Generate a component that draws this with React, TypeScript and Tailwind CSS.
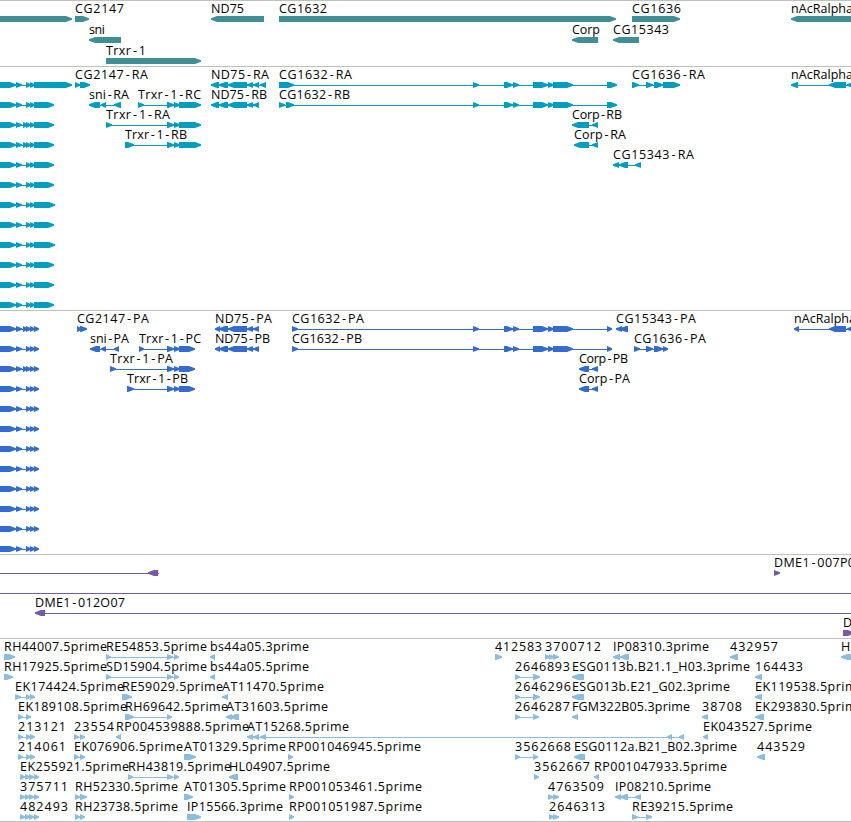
type Block = [number, number];

type Feature = {
   // label text, left edge and width in px
   label?: string;
   x: number;
   width?: number;
   blocks?: Block[];
   reverse?: boolean;
   // connector range when it runs past the blocks
   line?: Block;
};

type TrackProps = {
   rows: Feature[][];
   color: string;
   className: string;
   rowClass?: string;
};

const fwd = (label: string, x: number, end: number, blocks: Block[]): Feature => ({
   label,
   x,
   width: end - x,
   blocks,
});

const rev = (label: string, x: number, end: number, blocks: Block[]): Feature => ({
   label,
   x,
   width: end - x,
   blocks,
   reverse: true,
});

const left = (blocks: Block[]): Feature => ({ x: 0, blocks });

// --- GENES ---
const genes: Feature[][] = [
   [
      left([[-20, 72]]),
      fwd("CG2147", 75, 124, [[75, 89]]),
      rev("ND75", 211, 244, [[211, 264]]),
      fwd("CG1632", 279, 327, [[279, 616]]),
      fwd("CG1636", 632, 681, [[632, 680]]),
      rev("nAcRalpha", 791, 853, [[791, 870]]),
   ],
   [
      rev("sni", 89, 105, [[89, 121]]),
      rev("Corp", 572, 600, [[572, 598]]),
      rev("CG15343", 613, 669, [[613, 639]]),
   ],
   [fwd("Trxr-1", 106, 146, [[106, 201]])],
];

// --- TRANSCRIPTS ---
const sparse: Block[] = [[-9, 16], [16, 22], [26, 31], [30, 35]];
const dense: Block[] = [[-9, 16], [16, 22], [23, 28], [26, 31], [30, 35]];
const cg1632: Block[] = [[473, 479], [504, 513], [513, 519], [533, 548], [548, 554], [553, 573]];
const trxr: Block[] = [[167, 174], [174, 180], [179, 201]];
const nd75: Block[] = [[211, 219], [219, 228], [228, 247]];

const transcripts: Feature[][] = [
   [
      left([...sparse, [34, 72]]),
      fwd("CG2147-RA", 75, 148, [[75, 80], [80, 90]]),
      rev("ND75-RA", 211, 269, [...nd75, [247, 253], [253, 259], [260, 266]]),
      fwd("CG1632-RA", 279, 352, [[279, 294], ...cg1632, [607, 617]]),
      fwd("CG1636-RA", 632, 705, [[632, 639], [646, 653], [654, 663], [663, 680]]),
      rev("nAcRalpha", 791, 853, [[791, 798], [829, 846], [847, 870]]),
   ],
   [
      left([...sparse, [34, 54]]),
      rev("sni-RA", 89, 129, [[89, 100], [101, 106], [114, 121]]),
      fwd("Trxr-1-RC", 138, 201, [[138, 144], ...trxr]),
      rev("ND75-RB", 211, 267, [...nd75, [247, 253], [253, 259]]),
      fwd("CG1632-RB", 279, 350, [[279, 285], [286, 294], ...cg1632, [607, 617]]),
   ],
   [
      left([...dense, [34, 54]]),
      fwd("Trxr-1-RA", 106, 170, [[106, 112], ...trxr]),
      rev("Corp-RB", 572, 622, [[572, 589], [592, 598]]),
   ],
   [
      left([...dense, [34, 54]]),
      fwd("Trxr-1-RB", 125, 187, [[125, 134], ...trxr]),
      rev("Corp-RA", 574, 626, [[574, 589], [592, 598]]),
   ],
   [
      left([...sparse, [34, 54]]),
      rev("CG15343-RA", 613, 694, [[613, 619], [619, 628], [635, 641]]),
   ],
   [left([...sparse, [34, 54]])],
   [left([...sparse, [34, 55]])],
   [left([...sparse, [34, 54]])],
   [left([...sparse, [34, 55]])],
   [left([...sparse, [34, 54]])],
   [left([...sparse, [34, 54]])],
   [left([...sparse, [34, 54]])],
];

// --- PROTEINS ---
const trxrP: Block[] = [[167, 174], [174, 180], [179, 195]];
const nd75P: Block[] = [[215, 220], [219, 228], [228, 247], [247, 253], [253, 259]];

const proteins: Feature[][] = [
   [
      left([...dense, [34, 39]]),
      fwd("CG2147-PA", 77, 149, [[77, 82], [80, 87]]),
      rev("ND75-PA", 215, 272, nd75P),
      fwd("CG1632-PA", 292, 364, [[292, 298], ...cg1632, [607, 612]]),
      rev("CG15343-PA", 616, 696, [[616, 622], [620, 628]]),
      rev("nAcRalpha", 794, 856, [[794, 799], [829, 846], [847, 870]]),
   ],
   [
      left([...sparse, [34, 39]]),
      rev("sni-PA", 90, 129, [[90, 100], [101, 106], [114, 119]]),
      fwd("Trxr-1-PC", 139, 201, [[139, 144], ...trxrP]),
      rev("ND75-PB", 215, 270, nd75P),
      fwd("CG1632-PB", 292, 362, [[292, 298], ...cg1632, [607, 612]]),
      fwd("CG1636-PA", 634, 706, [[634, 640], [646, 653], [654, 663], [663, 668]]),
   ],
   [
      left([...dense, [34, 39]]),
      fwd("Trxr-1-PA", 110, 173, [[110, 116], ...trxrP]),
      rev("Corp-PB", 579, 628, [[579, 589], [592, 598]]),
   ],
   [
      left([...sparse, [34, 39]]),
      fwd("Trxr-1-PB", 127, 188, [[127, 134], ...trxrP]),
      rev("Corp-PA", 579, 630, [[579, 589], [592, 598]]),
   ],
   [left([...sparse, [34, 39]])],
   [left([...sparse, [34, 39]])],
   [left([...sparse, [34, 39]])],
   [left([...sparse, [34, 39]])],
   [left([...sparse, [34, 39]])],
   [left([...sparse, [34, 39]])],
   [left([...sparse, [34, 39]])],
   [left([...sparse, [34, 39]])],
];

// --- CLONES ---
const clones: Feature[][] = [
   [
      { x: 0, blocks: [[148, 158]], reverse: true, line: [0, 159] },
      fwd("DME1-007P0", 774, 855, [[774, 780]]),
   ],
   [{ x: 0, line: [0, 851] }],
   [{ label: "DME1-012O07", x: 35, width: 90, blocks: [[35, 45]], reverse: true, line: [40, 851] }],
   [fwd("D", 843, 852, [[843, 854]])],
];

// --- ESTS ---
const ests: Feature[][] = [
   [
      fwd("RH44007.5prime", 4, 107, [[4, 15]]),
      fwd("RE54853.5prime", 106, 207, [[106, 111], [167, 173], [174, 179]]),
      rev("bs44a05.3prime", 210, 309, [[210, 215]]),
      fwd("412583", 495, 542, [[495, 502]]),
      fwd("3700712", 545, 601, [[545, 550], [549, 554], [553, 559]]),
      rev("IP08310.3prime", 613, 709, [[613, 620], [620, 629]]),
      rev("432957", 730, 778, [[730, 738]]),
      rev("H", 841, 851, [[841, 860]]),
   ],
   [
      fwd("RH17925.5prime", 4, 107, [[4, 13]]),
      fwd("SD15904.5prime", 106, 207, [[106, 111], [167, 173], [174, 179]]),
      rev("bs44a05.5prime", 210, 309, [[210, 215]]),
      fwd("2646893", 515, 570, [[515, 520], [533, 540]]),
      rev("ESG0113b.B21.1_H03.3prime", 572, 750, [[572, 584]]),
      rev("164433", 755, 803, [[755, 762]]),
   ],
   [
      fwd("EK174424.5prime", 15, 124, [[15, 21], [26, 31], [30, 35]]),
      fwd("RE59029.5prime", 122, 223, [[122, 132]]),
      rev("AT11470.5prime", 222, 324, [[222, 228]]),
      fwd("2646296", 515, 571, [[515, 520], [533, 540]]),
      rev("ESG013b.E21_G02.3prime", 572, 730, [[572, 584]]),
      rev("EK119538.5prime", 755, 864, [[755, 762]]),
   ],
   [
      fwd("EK189108.5prime", 18, 127, [[18, 23], [26, 31]]),
      fwd("RH69642.5prime", 125, 228, [[125, 134], [167, 172]]),
      rev("AT31603.5prime", 226, 328, [[226, 232], [230, 239]]),
      fwd("2646287", 515, 570, [[515, 520], [533, 539]]),
      rev("FGM322B05.3prime", 572, 690, [[572, 578]]),
      rev("38708", 702, 742, [[702, 708]]),
      rev("EK293830.5prime", 755, 864, [[755, 764]]),
   ],
   [
      fwd("213121", 18, 66, [[18, 23], [26, 31], [30, 35]]),
      fwd("23554", 74, 114, [[74, 79], [80, 85]]),
      rev("RP004539888.5prime", 116, 249, [[116, 121]]),
      rev("AT15268.5prime", 247, 349, [[247, 253], [253, 259], [260, 266], [667, 672], [679, 684]]),
      rev("EK043527.5prime", 703, 812, [[703, 708]]),
   ],
   [
      fwd("214061", 18, 66, [[18, 23], [26, 31], [30, 35]]),
      fwd("EK076906.5prime", 74, 183, [[74, 79], [80, 85]]),
      fwd("AT01329.5prime", 184, 286, [[184, 196]]),
      fwd("RP001046945.5prime", 288, 421, [[288, 293]]),
      fwd("3562668", 515, 571, [[515, 520], [533, 538]]),
      rev("ESG0112a.B21_B02.3prime", 574, 737, [[574, 585]]),
      rev("443529", 757, 805, [[757, 765]]),
   ],
   [
      fwd("EK255921.5prime", 20, 129, [[20, 25], [25, 30], [29, 34], [34, 39]]),
      fwd("RH43819.5prime", 128, 231, [[128, 133], [167, 173], [174, 179]]),
      rev("HL04907.5prime", 229, 330, [[229, 238]]),
      fwd("3562667", 534, 590, [[534, 539]]),
      rev("RP001047933.5prime", 594, 727, [[594, 599]]),
   ],
   [
      fwd("375711", 20, 68, [[20, 25], [25, 30], [29, 34], [34, 39]]),
      fwd("RH52330.5prime", 75, 178, [[75, 80], [80, 87]]),
      fwd("AT01305.5prime", 184, 286, [[184, 193]]),
      fwd("RP001053461.5prime", 289, 422, [[289, 294]]),
      fwd("4763509", 548, 604, [[548, 553], [553, 559]]),
      rev("IP08210.5prime", 615, 711, [[615, 621], [620, 628], [635, 641]]),
   ],
   [
      fwd("482493", 20, 68, [[20, 25], [25, 30], [29, 34], [34, 39]]),
      fwd("RH23738.5prime", 75, 178, [[75, 80], [80, 85]]),
      fwd("IP15566.3prime", 187, 283, [[187, 201]]),
      fwd("RP001051987.5prime", 289, 422, [[289, 294]]),
      fwd("2646313", 549, 605, [[549, 554], [553, 559]]),
      fwd("RE39215.5prime", 632, 733, [[632, 638], [646, 652]]),
   ],
];

const TOP = 15;

// block with a blunt arrow head on the side it reads towards
function arrow([start, end]: Block, reverse?: boolean) {
   const head = Math.min(end - start, 6);
   const tail = reverse ? end : start;
   const neck = reverse ? start + head : end - head;
   const tip = reverse ? start : end;
   return [
      [tail, TOP],
      [neck, TOP],
      [tip, TOP + 2.3],
      [tip, TOP + 3.7],
      [neck, TOP + 6],
      [tail, TOP + 6],
   ].join(" ");
}

// a little air on both sides of a hyphen
function spacing(label: string) {
   return label
      .split("")
      .map((char, i) => (char === "-" || label[i - 1] === "-" ? 1.5 : 0))
      .join(" ");
}

function Glyph({ feature, color }: { feature: Feature; color: string }) {
   const { label, x, width, blocks = [], reverse, line } = feature;
   const range = line ?? [blocks[0][0] + 2, blocks[blocks.length - 1][1] - 2];
   const showLine = line || blocks.length > 1;

   return (
      <g>
         {showLine && <rect x={range[0]} y={TOP + 3} width={range[1] - range[0]} height={1} fill={color} />}
         {blocks.map((block) => (
            <polygon key={block[0]} points={arrow(block, reverse)} fill={color} />
         ))}
         {label && (
            <text
               x={x}
               y={12}
               dx={label.includes("-") ? spacing(label) : undefined}
               textLength={width}
               lengthAdjust="spacing"
            >
               {label}
            </text>
         )}
      </g>
   );
}

function Track({ rows, color, className, rowClass = "h-5" }: TrackProps) {
   return (
      <section className={`border-t border-[#bfbfbf] ${className}`}>
         {rows.map((features, i) => (
            <svg
               key={i}
               className={`block w-full overflow-visible fill-black font-['Open_Sans','Noto_Sans',sans-serif] text-[12.5px] ${rowClass}`}
            >
               {features.map((feature) => (
                  <Glyph key={`${feature.label}-${feature.x}`} feature={feature} color={color} />
               ))}
            </svg>
         ))}
      </section>
   );
}

export default function App() {
   return (
      <main className="h-[822px] w-[851px] overflow-hidden bg-white">
         <Track rows={genes} color="#408f96" className="pb-0.5" rowClass="h-[21px]" />
         <Track rows={transcripts} color="#009dbf" className="pb-[3px]" />
         <Track rows={proteins} color="#336ccc" className="pb-[3px]" />
         <Track rows={clones} color="#7759a8" className="pb-[3px]" />
         <Track rows={ests} color="#8abddf" className="border-b pb-0.5" />
      </main>
   );
}
